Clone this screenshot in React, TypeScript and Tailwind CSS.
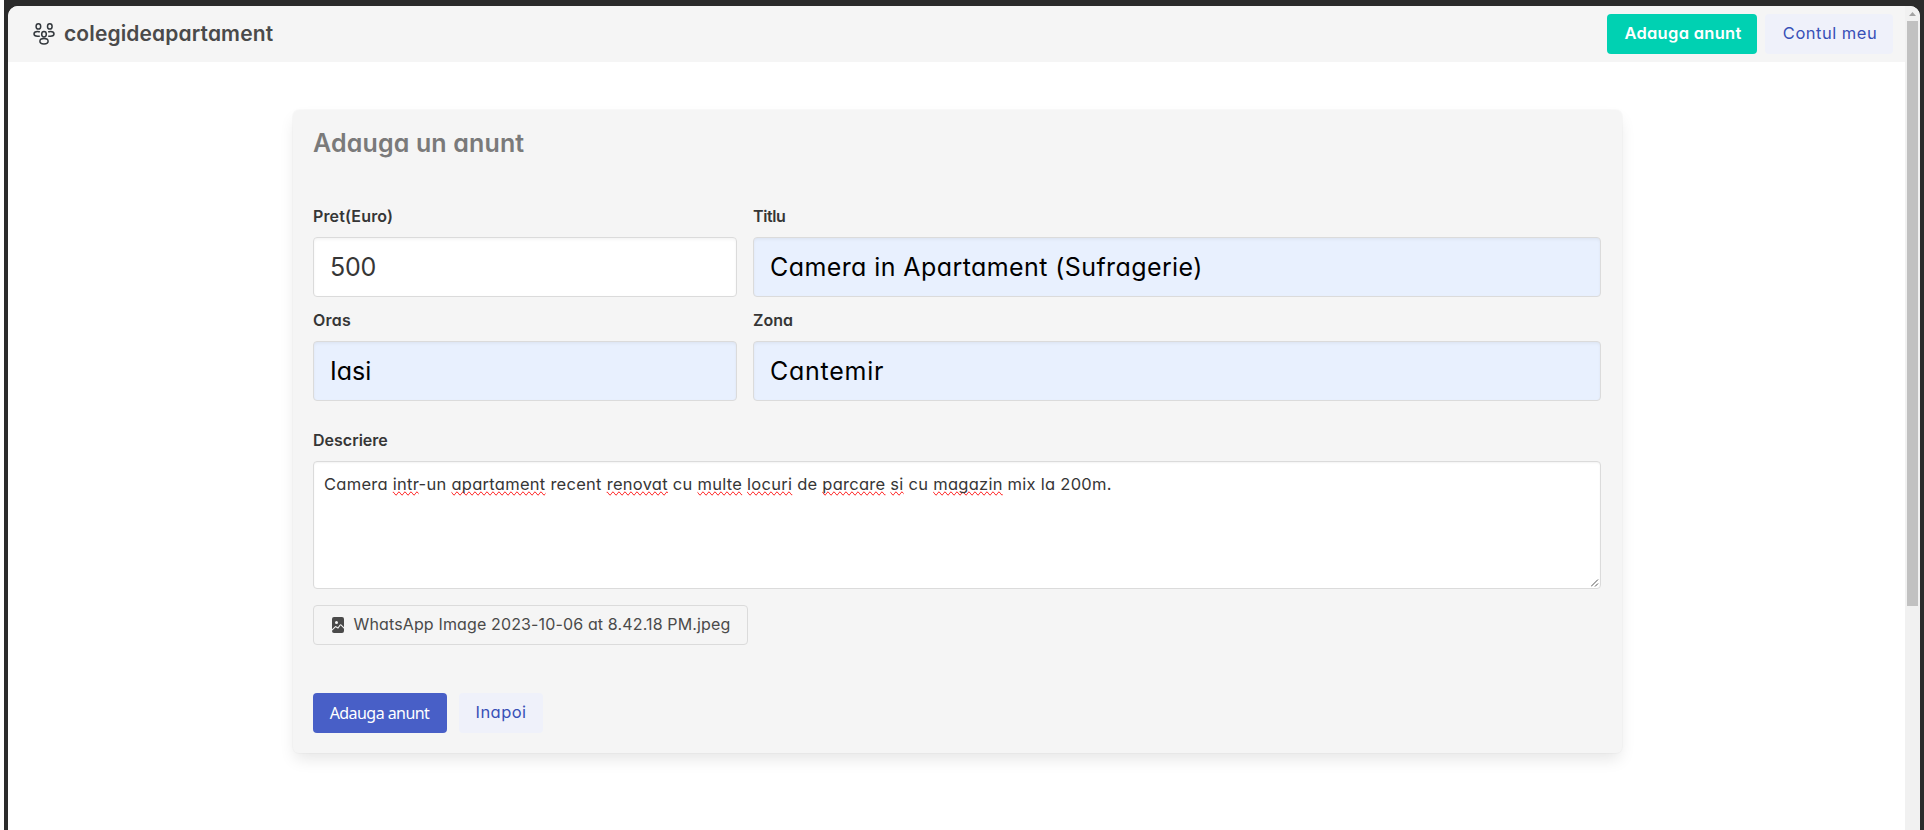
import type { ReactNode } from "react";
import { BsFileImageFill } from "react-icons/bs";

function PeopleIcon() {
  return (
    <svg width="24" height="24" viewBox="0 0 24 24" fill="none" stroke="#33383d" strokeWidth="1.5">
      <ellipse cx="6.4" cy="4.4" rx="2.3" ry="2.7" />
      <ellipse cx="17.8" cy="4.4" rx="2.3" ry="2.7" />
      <ellipse cx="12" cy="12.2" rx="2.3" ry="2.7" />
      <path d="M7.8 14.2H5.6C3.3 14.2 2 13.2 2 12s1.3-2.4 3.6-2.4c1 0 1.7.1 2.2.4" />
      <path d="M16.2 14.2h2.2c2.3 0 3.6-1 3.6-2.2s-1.3-2.4-3.6-2.4c-1 0-1.7.1-2.2.4" />
      <ellipse cx="12" cy="19.3" rx="4.1" ry="2.7" />
    </svg>
  );
}

type LabelProps = { tracking: string; children: ReactNode };

function Label({ tracking, children }: LabelProps) {
  return (
    <div className={`mb-[9px] h-[23px] leading-[23px] font-semibold text-[#363636] ${tracking}`}>
      {children}
    </div>
  );
}

type FieldProps = {
  label: string;
  labelTracking: string;
  value: string;
  valueTracking: string;
  filled?: boolean;
};

function Field({ label, labelTracking, value, valueTracking, filled }: FieldProps) {
  return (
    <div>
      <Label tracking={labelTracking}>{label}</Label>
      <div
        className={`flex h-15 items-center rounded border border-[#dbdbdb] px-4 pt-0.5 text-[25px] shadow-[inset_0_1.5px_3px_rgba(10,10,10,0.05)] ${
          filled ? "bg-[#e8f0fe] text-black" : "bg-white text-[#363636]"
        } ${valueTracking}`}
      >
        {value}
      </div>
    </div>
  );
}

function Misspelled({ children }: { children: ReactNode }) {
  return <span className="[text-decoration-line:spelling-error]">{children}</span>;
}

export default function App() {
  return (
    <div className="flex h-[830px] w-[1924px] bg-white pl-1 font-['Inter',sans-serif] text-base [font-feature-settings:'cv11']">
      <div className="flex flex-1 bg-[#2b2b2b] px-1 pt-1.5">
        <div className="flex flex-1 overflow-hidden rounded-t-[10px] bg-white">
          <div className="flex-1">
            <nav className="flex h-14 items-center justify-between bg-[#f5f5f5] pr-3 pl-6">
              <div className="flex items-center gap-2">
                <PeopleIcon />
                <span className="text-[21px] font-semibold tracking-[0.12px] text-[#4a4a4a]">
                  colegideapartament
                </span>
              </div>
              <div className="flex gap-2">
                <button className="flex h-10 w-[150px] items-center justify-center rounded bg-[#00d1b2] pb-0.5 pl-0.5 text-[16.5px] font-semibold tracking-[0.3px] text-white">
                  Adauga anunt
                </button>
                <button className="flex h-10 w-32 items-center justify-center rounded bg-[#eff1fa] pb-0.5 pl-0.5 text-[16.5px] tracking-[0.5px] text-[#3850b7]">
                  Contul meu
                </button>
              </div>
            </nav>

            <main className="mt-12 ml-[284.5px] h-[643px] w-[1329px] rounded-md bg-[#f5f5f5] pt-[15px] pl-[20.5px] shadow-[0_8px_16px_-2px_rgba(10,10,10,0.1),0_0_0_1px_rgba(10,10,10,0.02)]">
              <h1 className="h-9 text-[25px] leading-9 font-semibold tracking-[0.15px] text-[#7a7a7a]">
                Adauga un anunt
              </h1>
              <div className="mt-11 grid grid-cols-[424px_848px] gap-x-4 gap-y-3">
                <Field
                  label="Pret(Euro)"
                  labelTracking="tracking-[0.15px]"
                  value="500"
                  valueTracking="tracking-[-0.2px]"
                />
                <Field
                  label="Titlu"
                  labelTracking="tracking-[-0.4px]"
                  value="Camera in Apartament (Sufragerie)"
                  valueTracking="tracking-[0.41px]"
                  filled
                />
                <Field
                  label="Oras"
                  labelTracking="tracking-[0.2px]"
                  value="Iasi"
                  valueTracking="tracking-[0px]"
                  filled
                />
                <Field
                  label="Zona"
                  labelTracking="tracking-[0px]"
                  value="Cantemir"
                  valueTracking="tracking-[0.75px]"
                  filled
                />
              </div>
              <div className="mt-7">
                <Label tracking="tracking-[0px]">Descriere</Label>
                <div className="flex h-32 w-[1288px] flex-col justify-between rounded border border-[#dbdbdb] bg-white pt-[10px] pl-[10px] text-[16.5px] leading-6 tracking-[0.27px] text-[#363636] shadow-[inset_0_1px_2px_rgba(10,10,10,0.05)]">
                  <p>
                    Camera <Misspelled>intr</Misspelled>-un <Misspelled>apartament</Misspelled> recent{" "}
                    <Misspelled>renovat</Misspelled> cu <Misspelled>multe</Misspelled>{" "}
                    <Misspelled>locuri</Misspelled> de <Misspelled>parcare</Misspelled>{" "}
                    <Misspelled>si</Misspelled> cu <Misspelled>magazin</Misspelled> mix la 200m.
                  </p>
                  <svg className="self-end" width="9" height="9" viewBox="0 0 9 9" stroke="#555" strokeWidth="1">
                    <path d="M0 7.5L7 0.5M4 7.5L7 4.5" />
                  </svg>
                </div>
              </div>
              <div className="mt-4 flex h-10 w-[435px] items-center rounded border border-[#dbdbdb] pl-4 text-[#4a4a4a]">
                <BsFileImageFill size={16} />
                <span className="ml-[7.5px] pb-0.5 tracking-[0.14px]">
                  WhatsApp Image 2023-10-06 at 8.42.18 PM.jpeg
                </span>
              </div>
              <div className="mt-12 flex gap-3">
                <button className="flex h-10 w-[134px] items-center justify-center rounded bg-[#485fc7] pr-px font-['Noto_Sans',sans-serif] tracking-[-0.55px] text-white">
                  Adauga anunt
                </button>
                <button className="flex h-10 w-[84px] items-center justify-center rounded bg-[#eff1fa] pb-0.5 text-[16.5px] tracking-[0.45px] text-[#3850b7]">
                  Inapoi
                </button>
              </div>
            </main>
          </div>

          <div className="flex w-[15px] flex-col items-center bg-[#f1f1f1]">
            <svg width="15" height="15" viewBox="0 0 15 15">
              <path d="M4 10L7.5 6L11 10Z" fill="#a3a3a3" />
            </svg>
            <div className="h-[585px] w-[11px] bg-[#c1c1c1]" />
          </div>
        </div>
      </div>
    </div>
  );
}
